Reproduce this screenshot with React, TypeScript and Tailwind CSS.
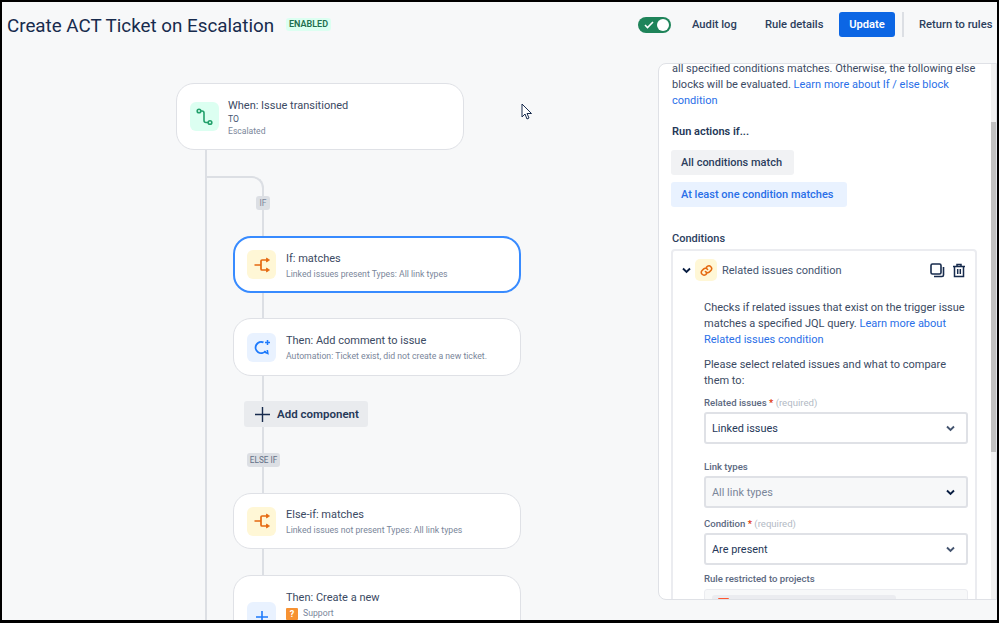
const font = { fontFamily: 'Roboto, "Noto Sans", sans-serif' };

function BranchIcon() {
  return (
    <svg width="18" height="18" viewBox="0 0 18 18" fill="none" stroke="#e56910" strokeWidth="1.700">
      <path d="M1.500 9h6.500M8 9V5c0-.6.4-1 1-1h5M8 9v4c0 .6.4 1 1 1h5" />
      <path d="M13.500 2l3 2-3 2zM13.500 12l3 2-3 2z" fill="#e56910" strokeWidth="0.800" />
    </svg>
  );
}

function Chevron({ dark }: { dark?: boolean }) {
  return (
    <svg width="9" height="7" viewBox="0 0 9 7" fill="none" stroke={dark ? "#091e42" : "#44546f"} strokeWidth="1.900">
      <path d="M1 1.500L4.500 5 8 1.500" />
    </svg>
  );
}

function Card({ icon, iconBg, title, sub, active, className }: { icon: React.ReactNode; iconBg: string; title: string; sub: React.ReactNode; active?: boolean; className: string }) {
  return (
    <div className={`w-[288px] bg-white rounded-[18px] flex items-center gap-[10px] shrink-0 ${active ? "border-2 border-[#388bff] pl-[12px]" : "border border-[#dfe1e6] pl-[13px]"} ${className}`}>
      <div className={`w-[29px] h-[29px] rounded-[6px] flex items-center justify-center shrink-0 ${iconBg}`}>{icon}</div>
      <div className="min-w-0 pt-[2px]">
        <div className="text-[11px] leading-[16px] text-[#3b4a63] whitespace-nowrap">{title}</div>
        {sub}
      </div>
    </div>
  );
}

function Connector({ h }: { h: string }) {
  return <div className={`w-[2px] ml-[29px] bg-[#dcdfe4] shrink-0 ${h}`} />;
}

function Field({ label, required, value, muted, className }: { label: string; required?: boolean; value: string; muted?: boolean; className?: string }) {
  return (
    <div className={className}>
      <div className="text-[9.600px] leading-[14px] pb-[2px] text-[#5b6880] font-medium whitespace-nowrap">
        {label}
        {required && <span className="text-[#de350b]"> *</span>}
        {required && <span className="text-[#b3bac5] font-normal"> (required)</span>}
      </div>
      <div className={`h-[32px] w-[264px] rounded-[3px] border-2 border-[#dfe1e6] flex items-center justify-between pl-[6px] pr-[11px] ${muted ? "bg-[#f7f8f9]" : "bg-white"}`}>
        <span className={`pt-[2px] text-[10.900px] ${muted ? "text-[#7a869a]" : "text-[#253858]"}`}>{value}</span>
        <Chevron dark={muted} />
      </div>
    </div>
  );
}

export default function App() {
  return (
    <div style={font} className="relative w-[999px] h-[623px] overflow-hidden border-t-2 border-l-2 border-r-2 border-b-[3px] border-black bg-[#f7f8f9] flex flex-col">
      <header className="h-[61px] shrink-0 flex items-start pt-[10px]">
        <h1 className="ml-[5px] text-[18.800px] leading-[28px] text-[#172b4d] font-normal whitespace-nowrap">Create ACT Ticket on Escalation</h1>
        <span className="ml-[12px] mt-[6px] h-[13px] w-[45px] rounded-[3px] bg-[#dcfff1] text-[#216e4e] text-[9px] leading-[13px] font-semibold text-center">ENABLED</span>
        <div className="ml-auto flex items-center h-[25px] text-[11.200px] text-[#2c3e5d] font-medium whitespace-nowrap">
          <div className="w-[33px] h-[16px] rounded-full bg-[#1f845a] flex items-center justify-between pl-[6px] pr-[2px]">
            <svg width="10" height="8" viewBox="0 0 10 8" fill="none" stroke="#fff" strokeWidth="1.600"><path d="M1 4l2.500 2.500L9 1" /></svg>
            <div className="w-[12px] h-[12px] rounded-full bg-white" />
          </div>
          <span className="ml-[21px] w-[46px] pt-[2px]">Audit log</span>
          <span className="ml-[27px] w-[58px] pt-[2px]">Rule details</span>
          <span className="ml-[16px] w-[56px] h-[25px] pt-[2px] rounded-[3px] bg-[#0c66e4] text-white font-semibold flex items-center justify-center">Update</span>
          <div className="ml-[7px] w-[2px] h-[25px] bg-[#dcdfe4]" />
          <span className="ml-[15px] w-[78px] pt-[2px]">Return to rules</span>
        </div>
      </header>

      <div className="flex-1 min-h-0 flex">
        <section className="w-[656px] shrink-0 flex flex-col overflow-hidden pt-[20px]">
          <Card
            className="ml-[174px] h-[67px] !gap-[9px]"
            iconBg="bg-[#dcfff1]"
            title="When: Issue transitioned"
            icon={
              <svg width="18" height="20" viewBox="0 0 18 20" fill="none" stroke="#22a06b" strokeWidth="1.600">
                <circle cx="3" cy="4" r="1.800" />
                <circle cx="14" cy="15.500" r="1.800" />
                <path d="M4.800 4H6c1.400 0 2 .6 2 2v7.500c0 1.400.6 2 2 2h2.200" />
              </svg>
            }
            sub={
              <div className="text-[8.600px] leading-[12px] mt-[-1px]">
                <div className="text-[#44546f]">TO</div>
                <div className="text-[#7a869a]">Escalated</div>
              </div>
            }
          />
          <div className="ml-[203px] flex-1 border-l-2 border-[#dcdfe4] pt-[26px] flex flex-col">
            <div className="relative h-[60px] w-[57px] shrink-0 border-t-2 border-r-2 border-[#dcdfe4] rounded-tr-[12px]">
              <span className="absolute right-[-8px] top-[18px] h-[14px] w-[14px] rounded-[3px] bg-[#dcdfe4] text-[#7a869a] text-[8.500px] leading-[14px] text-center">IF</span>
            </div>
            <div className="ml-[26px] flex flex-col">
              <Card
                active
                className="h-[57px]"
                iconBg="bg-[#fff7d6]"
                title="If: matches"
                icon={<BranchIcon />}
                sub={<div className="text-[8.700px] leading-[14px] text-[#7a869a] whitespace-nowrap">Linked issues present Types: All link types</div>}
              />
              <Connector h="h-[25px]" />
              <Card
                className="h-[58px]"
                iconBg="bg-[#e9f2ff]"
                title="Then: Add comment to issue"
                icon={
                  <svg width="18" height="18" viewBox="0 0 18 18" fill="none" stroke="#1d7afc" strokeWidth="1.900">
                    <path d="M10.500 4.400A5.600 5.600 0 1 0 12.600 13" />
                    <path d="M11.500 14l3.300 1.500-.5-3.500" strokeWidth="1.600" />
                    <path d="M14.500 2v5M12 4.500h5" strokeWidth="1.500" />
                  </svg>
                }
                sub={<div className="text-[8.700px] leading-[14px] text-[#7a869a] whitespace-nowrap">Automation: Ticket exist, did not create a new ticket.</div>}
              />
              <Connector h="h-[25px]" />
              <div className="ml-[11px] w-[124px] h-[26px] shrink-0 rounded-[3px] bg-[#e9ebee] flex items-center pl-[11px] gap-[7px] text-[11.500px] font-semibold text-[#253858] whitespace-nowrap">
                <svg width="15" height="15" viewBox="0 0 15 15" stroke="#172b4d" strokeWidth="1.400"><path d="M7.500 0v15M0 7.500h15" /></svg>
                <span className="pt-[2px]">Add component</span>
              </div>
              <Connector h="h-[26px]" />
              <span className="ml-[14px] w-[33px] h-[14px] shrink-0 rounded-[3px] bg-[#dcdfe4] text-[#626f86] text-[8.200px] leading-[14px] text-center whitespace-nowrap">ELSE IF</span>
              <Connector h="h-[26px]" />
              <Card
                className="h-[56px]"
                iconBg="bg-[#fff7d6]"
                title="Else-if: matches"
                icon={<BranchIcon />}
                sub={<div className="text-[8.700px] leading-[14px] text-[#7a869a] whitespace-nowrap">Linked issues not present Types: All link types</div>}
              />
              <Connector h="h-[26px]" />
              <div className="w-[288px] h-[70px] shrink-0 bg-white rounded-t-[18px] border border-[#dfe1e6] flex pl-[13px] gap-[10px]">
                <div className="mt-[26px] w-[29px] h-[29px] rounded-[6px] bg-[#e9f2ff] flex items-center justify-center shrink-0">
                  <svg width="12" height="12" viewBox="0 0 12 12" stroke="#1d7afc" strokeWidth="1.600"><path d="M6 0v12M0 6h12" /></svg>
                </div>
                <div className="mt-[14px]">
                  <div className="text-[11px] leading-[16px] text-[#3b4a63]">Then: Create a new</div>
                  <div className="flex items-center gap-[5px] mt-[1px]">
                    <span className="w-[12px] h-[12px] rounded-[1px] bg-[#f79232] text-white text-[9px] leading-[12px] font-bold text-center">?</span>
                    <span className="text-[8.700px] text-[#7a869a]">Support</span>
                  </div>
                </div>
              </div>
            </div>
          </div>
        </section>

        <aside className="relative flex-1 h-[537px] bg-white rounded-tl-[8px] rounded-bl-[8px] border border-[#dfe1e6] overflow-hidden pl-[13px] pr-[19px]">
          <div className="absolute right-0 top-0 bottom-0 w-[5px] bg-[#f1f1f1]">
            <div className="mt-[58px] h-[330px] bg-[#c1c1c1]" />
          </div>
          <div className="mt-[-3px] text-[11px] leading-[16px] text-[#3b4a63]">
            <p className="w-[306px]">
              all specified conditions matches. Otherwise, the following else blocks will be evaluated. <span className="text-[#2a6fe8]">Learn more about If / else block condition</span>
            </p>
            <div className="mt-[15px] font-semibold text-[#253858]">Run actions if...</div>
            <div className="mt-[10px] ml-[-1px] w-[123px] h-[25px] pl-[10px] pt-[1px] rounded-[3px] bg-[#f1f2f4] font-medium text-[#2c3e5d] flex items-center">All conditions match</div>
            <div className="mt-[7px] ml-[-1px] w-[176px] h-[25px] pl-[10px] pt-[1px] rounded-[3px] bg-[#e9f2ff] font-medium text-[#2a6fe8] flex items-center">At least one condition matches</div>
            <div className="mt-[24px] font-medium text-[#2c3e5d]">Conditions</div>
            <div className="mt-[2px] ml-[-1px] w-[306px] h-[400px] rounded-[4px] border-2 border-[#ebecf0] pt-[8px]">
              <div className="flex items-center h-[22px]">
                <div className="ml-[9px] w-[9px] flex"><Chevron dark /></div>
                <div className="ml-[4px] w-[22px] h-[22px] rounded-[5px] bg-[#fff7d6] flex items-center justify-center">
                  <svg width="13" height="13" viewBox="0 0 24 24" fill="none" stroke="#e56910" strokeWidth="2.800" strokeLinecap="round">
                    <path d="M10 14a5 5 0 0 0 7.500.5l3-3a5 5 0 0 0-7-7l-1.700 1.700" />
                    <path d="M14 10a5 5 0 0 0-7.500-.5l-3 3a5 5 0 0 0 7 7l1.700-1.700" />
                  </svg>
                </div>
                <span className="ml-[5px] pt-[2px] text-[#44546f] whitespace-nowrap">Related issues condition</span>
                <svg className="ml-auto" width="15" height="15" viewBox="0 0 15 15" fill="none" stroke="#172b4d" strokeWidth="1.600">
                  <rect x="1" y="1" width="10" height="10" rx="1.500" />
                  <path d="M13.500 4v8c0 1-.5 1.500-1.500 1.500H4" />
                </svg>
                <svg className="ml-[7px] mr-[9px]" width="14" height="15" viewBox="0 0 14 15" fill="none" stroke="#172b4d" strokeWidth="1.500">
                  <path d="M1 3.500h12M5 3.500V1.500h4v2M2.500 3.500v10h9v-10" />
                  <path d="M5.700 6v5M8.300 6v5" />
                </svg>
              </div>
              <div className="ml-[31px] mt-[19px]">
                <p className="w-[264px]">
                  Checks if related issues that exist on the trigger issue matches a specified JQL query. <span className="text-[#2a6fe8]">Learn more about Related issues condition</span>
                </p>
                <p className="mt-[9px] w-[262px]">Please select related issues and what to compare them to:</p>
                <Field className="mt-[7px]" label="Related issues" required value="Linked issues" />
                <Field className="mt-[16px]" label="Link types" value="All link types" muted />
                <Field className="mt-[9px]" label="Condition" required value="Are present" />
                <div className="mt-[6px] pb-[1px] text-[9.600px] leading-[16px] text-[#5b6880] font-medium">Rule restricted to projects</div>
                <div className="mt-[1px] w-[264px] h-[40px] rounded-[3px] bg-[#f7f8f9] border border-[#ebecf0] pl-[7px] pt-[5px]">
                  <div className="w-[184px] h-[24px] rounded-[3px] bg-[#ebecf0] pt-[3px]">
                    <div className="ml-[6px] w-[11px] h-[12px] rounded-[1px] bg-[#ff5630]" />
                  </div>
                </div>
              </div>
            </div>
          </div>
        </aside>
      </div>

      <svg className="absolute left-[519px] top-[101px]" width="12" height="18" viewBox="0 0 12 18" fill="#fff" stroke="#172b4d" strokeWidth="1">
        <path d="M1 1v13l3-3 2 5 2-1-2-4.500h4.500z" />
      </svg>
    </div>
  );
}
